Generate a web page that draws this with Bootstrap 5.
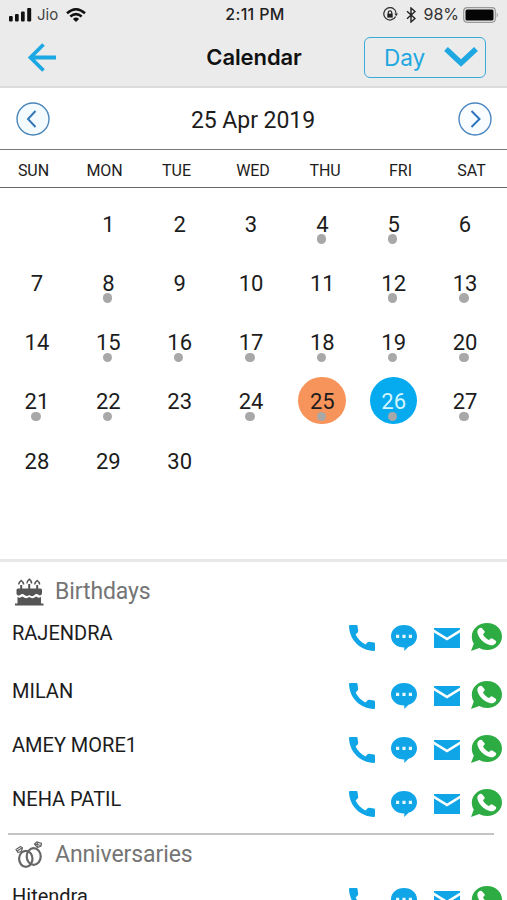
<!DOCTYPE html>
<html lang="en">
<head>
<meta charset="utf-8">
<meta name="viewport" content="width=device-width, initial-scale=1">
<title>Calendar</title>
<link href="https://cdn.jsdelivr.net/npm/bootstrap@5.3.0/dist/css/bootstrap.min.css" rel="stylesheet">
<style>
  body { font-family: Roboto, "Liberation Sans", sans-serif; color: #1c1c1c; height: 900px; overflow: hidden; background: #fff; }
  svg { display: block; flex: none; }
  .app-top { height: 88px; background: #ebebeb; border-bottom: 2px solid #dcdcdc; font-family: Inter, "Liberation Sans", sans-serif; }
  .status { height: 29px; padding: 0 8px 0 9px; font-size: 16px; line-height: 29px; color: #222; }
  .status .side { flex: 1 1 0; }
  .carrier { margin-left: 5px; font-size: 15px; color: #444; }
  .percent { margin: 0 4px 0 7px; font-size: 16px; color: #333; }
  .clock { font-weight: 500; font-size: 16px; letter-spacing: .35px; margin-left: 2px; }
  .title-row { height: 56px; padding: 0 21px 0 27px; }
  .title-row .side { flex: 1 1 0; }
  .title-row h1 { font-size: 22px; font-weight: 600; color: #111; line-height: 54px; letter-spacing: -.1px; margin-left: -5px; }
  .day-btn { width: 122px; height: 41px; border: 1.5px solid #3aa9dc; border-radius: 6px; color: #1ea7e1; padding: 0 7px 0 19px; font-size: 22.5px; line-height: 39px; background: transparent; }
  .month-row { height: 62px; padding: 0 15px 0 16px; font-size: 23px; border-bottom: 1.5px solid #777; }
  .month { padding-top: 5px; margin-left: -2px; letter-spacing: -.05px; }
  .week { height: 38px; font-size: 16px; line-height: 41px; border-bottom: 1.5px solid #666; display: grid; grid-template-columns: 67px 75px 69px 84px 60px 91px 51px; text-align: center; letter-spacing: -.05px; }
  .days { display: grid; grid-template-columns: repeat(7, 71.35px); grid-auto-rows: 59.25px; padding: 6.7px 0 0 1.3px; height: 371px; font-size: 22px; line-height: 59.25px; text-align: center; }
  .days > span { position: relative; z-index: 0; }
  .dot::after { content: ""; position: absolute; left: 50%; top: 39.5px; width: 9.5px; height: 9.5px; margin-left: -5.8px; border-radius: 50%; background: #a8a8a8; }
  .ring::before { content: ""; position: absolute; z-index: -1; left: 50%; top: 4.5px; width: 47.5px; height: 47.5px; margin-left: -24px; border-radius: 50%; background: #f7945b; }
  .ring.now::before { background: #05aaef; }
  .now { color: #d3f6ff; }
  .events { border-top: 3.5px solid #e8e8e8; }
  .group-title { font-size: 23px; color: #757575; padding-left: 15px; gap: 11px; line-height: 30px; letter-spacing: -.1px; }
  .group-birthday { height: 43px; padding-top: 16px; }
  .group-anniversary { height: 40px; }
  .person { height: 54px; padding: 0 5px 0 12px; font-size: 20px; }
  .person .who { line-height: 30px; }
  .person-first { height: 58px; margin-top: 13px; }
  .person-last { height: 49px; }
  .acts { margin-top: 5px; height: 30px; }
  .rule { height: 1.5px; background: #c4c4c4; margin: 0 13px 0 8px; }
  .person-next { margin-top: 6px; }
</style>
</head>
<body>
<svg width="0" height="0" class="position-absolute" aria-hidden="true">
  <symbol id="phone" viewBox="0 0 26 26"><path fill="#10a5e6" d="M1 0h6.800Q8.400 0 8.500 1L9.200 5.800Q9.200 6.800 8.600 7.400L6.600 9.600C8.700 13.800 12 17.200 16.400 19.500L18.600 17.200Q19.300 16.600 20.200 16.800L25 17.500Q26 17.700 26 18.700V25Q26 26 25 26C11 25.500 .5 15 0 1Q0 0 1 0Z"/></symbol>
  <symbol id="chat" viewBox="0 0 26 26"><path fill="#10a5e6" d="M13 0C20.200 0 26 4.800 26 11.200C26 16.500 21.800 20.700 17.500 21.800L13.300 26V22.500C5.500 22.500 0 17.500 0 11.200C0 4.800 5.800 0 13 0Z"/><path fill="#e6f8ff" d="M5 9.800h3.200V13H5zM11.400 9.800h3.200V13h-3.200zM17.800 9.800H21V13h-3.200z"/></symbol>
  <symbol id="mail" viewBox="0 0 26 20"><path fill="#10a5e6" d="M0 0H26V1.600L13 9.500L0 1.600ZM0 4.600L13 12.600L26 4.600V20H0Z"/></symbol>
  <symbol id="whats" viewBox="0 0 31 28"><path fill="#2cac42" d="M16 0C24.500 0 31 6 31 13.500S24.500 27 16 27C13 27 10.500 26.300 8.300 25L0 28L2.800 20.500C1.400 18.500 .8 16 .8 13.500C.8 6 7.500 0 16 0Z"/><path fill="#fff" d="M8.200 5.300Q9.500 4.300 10.800 4.900L13.600 8.300Q14.100 9.200 13.200 10L12 11.300C13 13.600 15.200 15.800 18 17L19.500 15.700Q20.300 15 21.200 15.500L24.800 17.800Q25.700 18.600 24.900 19.900C23 22.500 20.500 22.600 18 21.700C12.500 20 8 15.500 6.600 10.500C6 8.300 6.500 6.400 8.200 5.300Z"/></symbol>
  <symbol id="acts" viewBox="0 0 153 30">
    <use href="#phone" x="0" y="2" width="26" height="26"/>
    <use href="#chat" x="42" y="2" width="26" height="26"/>
    <use href="#mail" x="85" y="5" width="26" height="20"/>
    <use href="#whats" x="122" y="0" width="31" height="28"/>
  </symbol>
</svg>

<header class="app-top">
  <div class="status d-flex align-items-center">
    <div class="side d-flex align-items-center">
      <svg width="23" height="14" viewBox="0 0 23 14" fill="#111"><rect y="8" width="3.700" height="5.500" rx="1"/><rect x="6" y="6" width="3.700" height="7.500" rx="1"/><rect x="12" y="3.500" width="3.700" height="10" rx="1"/><rect x="18.200" y="0" width="4" height="13.500" rx="1"/></svg>
      <span class="carrier">Jio</span>
      <svg class="ms-2" width="20" height="14" viewBox="0 0 20 14" fill="none" stroke="#111" stroke-width="2.500"><path d="M1 5.300Q10-2.700 19 5.300"/><path d="M4.300 8.500Q10 3.700 15.700 8.500"/><path d="M6.900 10.900Q10 8.300 13.100 10.900L10 14Z" fill="#111" stroke="none"/></svg>
    </div>
    <span class="clock">2:11 PM</span>
    <div class="side d-flex align-items-center justify-content-end">
      <svg width="15" height="15" viewBox="0 0 15 15" fill="none" stroke="#333" stroke-width="1.300"><path d="M12.600 9.500A6.200 6.200 0 1 1 13.200 6.500"/><path d="M11.300 6.500H15L13.200 9.300Z" fill="#333" stroke="none"/><rect x="4.300" y="6.600" width="5.400" height="4" fill="#222" stroke="none"/><path d="M5.300 7V5.500a1.700 1.700 0 0 1 3.400 0V7"/></svg>
      <svg class="ms-2" width="10" height="16" viewBox="0 0 10 16" fill="none" stroke="#222" stroke-width="1.400"><path d="M1 4.300L9 11.500L5 15V1L9 4.500L1 11.700"/></svg>
      <span class="percent">98%</span>
      <svg width="36" height="16" viewBox="0 0 36 16"><rect x=".7" y=".7" width="31.600" height="14.600" rx="3.500" fill="none" stroke="#999" stroke-width="1.200"/><rect x="2.500" y="2.500" width="28" height="11" rx="1.500" fill="#050505"/><path d="M33.700 5.500Q36 8 33.700 10.500Z" fill="#999"/></svg>
    </div>
  </div>
  <div class="title-row d-flex align-items-center">
    <div class="side"><svg width="30" height="29" viewBox="0 0 30 29" fill="none" stroke="#1ca8e2" stroke-width="3.800"><path d="M16.500 1.500L3.500 14.500L16.500 27.500M3 14.500H29"/></svg></div>
    <h1 class="mb-0">Calendar</h1>
    <div class="side d-flex justify-content-end">
      <button class="day-btn d-flex align-items-center justify-content-between" type="button"><span>Day</span><svg width="34" height="21" viewBox="0 0 34 21" fill="none" stroke="#1ea7e1" stroke-width="5.500"><path d="M2 2L17 16L32 2"/></svg></button>
    </div>
  </div>
</header>

<main>
  <div class="month-row d-flex align-items-center justify-content-between">
    <svg width="34" height="34" viewBox="0 0 34 34" fill="none" stroke="#4a86b8"><circle cx="17" cy="17" r="16" fill="#f4fbff" stroke-width="1.400"/><path d="M19.500 9L12 17L19.500 25" stroke="#3478b8" stroke-width="2"/></svg>
    <span class="month">25 Apr 2019</span>
    <svg width="34" height="34" viewBox="0 0 34 34" fill="none" stroke="#4a86c0"><circle cx="17" cy="17" r="16" fill="#fafdff" stroke-width="1.400"/><path d="M13.500 9L21.500 17L13.500 25" stroke="#2c74c0" stroke-width="2"/></svg>
  </div>
  <div class="week"><span>SUN</span><span>MON</span><span>TUE</span><span>WED</span><span>THU</span><span>FRI</span><span>SAT</span></div>
  <div class="days">
    <span></span><span>1</span><span>2</span><span>3</span><span class="dot">4</span><span class="dot">5</span><span>6</span>
    <span>7</span><span class="dot">8</span><span>9</span><span>10</span><span>11</span><span class="dot">12</span><span class="dot">13</span>
    <span>14</span><span class="dot">15</span><span class="dot">16</span><span class="dot">17</span><span class="dot">18</span><span class="dot">19</span><span class="dot">20</span>
    <span class="dot">21</span><span class="dot">22</span><span>23</span><span class="dot">24</span><span class="dot ring">25</span><span class="dot ring now">26</span><span class="dot">27</span>
    <span>28</span><span>29</span><span>30</span>
  </div>

  <section class="events">
    <div class="group-title group-birthday d-flex align-items-center">
      <svg width="29" height="28" viewBox="0 0 29 28" fill="#555"><path d="M0 25.500h28.500v2H0zM2.500 19Q5 20.500 7.500 18.500Q11 21.500 14.300 19Q17.500 21.500 21 18.500Q23.500 20.500 26 19V26H2.500ZM3 10.500H25.500Q27 10.500 27 12V15.500Q26 18.500 23.500 16.800Q21 15 19 17.500Q16.500 19 14.300 17Q12 19 9.500 17Q7.500 15 5 17Q2 18.500 1.500 15.500V12Q1.500 10.500 3 10.500ZM5.200 7h2v4h-2zM13.200 6h2v5h-2zM21.200 7h2v4h-2z"/><path d="M4 6.500Q3.500 4.500 6.200 2.500Q9 4.500 8.400 6.500M12 5.500Q11.500 3.500 14.200 1.200Q17 3.500 16.400 5.500M20 6.500Q19.500 4.500 22.200 2.500Q25 4.500 24.400 6.500" fill="none" stroke="#555" stroke-width="1.500"/></svg>
      <span>Birthdays</span>
    </div>
    <div class="person person-first d-flex justify-content-between"><span class="who">RAJENDRA</span><svg class="acts" width="153" height="30"><use href="#acts"/></svg></div>
    <div class="person d-flex justify-content-between"><span class="who">MILAN</span><svg class="acts" width="153" height="30"><use href="#acts"/></svg></div>
    <div class="person d-flex justify-content-between"><span class="who">AMEY MORE1</span><svg class="acts" width="153" height="30"><use href="#acts"/></svg></div>
    <div class="person person-last d-flex justify-content-between"><span class="who">NEHA PATIL</span><svg class="acts" width="153" height="30"><use href="#acts"/></svg></div>
    <div class="rule"></div>
    <div class="group-title group-anniversary d-flex align-items-center">
      <svg width="29" height="28" viewBox="0 0 29 28" fill="none" stroke="#666"><ellipse cx="10.800" cy="17.800" rx="6.700" ry="8" stroke-width="2.200"/><ellipse cx="18.700" cy="15.500" rx="7" ry="8.300" stroke-width="2.200"/><path d="M1 8.500L5.500 5.500L7.500 7L6.300 10.300L3 11.500ZM2 10L7 7M19.500 3L22 1L26.500 2.500L26 5L22.500 6.500ZM20 3L26 4.500M22.500 1.500L22.500 6" stroke-width="1.200"/></svg>
      <span>Anniversaries</span>
    </div>
    <div class="person person-next d-flex justify-content-between"><span class="who">Hitendra</span><svg class="acts" width="153" height="30"><use href="#acts"/></svg></div>
  </section>
</main>
<script src="https://cdn.jsdelivr.net/npm/bootstrap@5.3.0/dist/js/bootstrap.bundle.min.js"></script>
</body>
</html>
